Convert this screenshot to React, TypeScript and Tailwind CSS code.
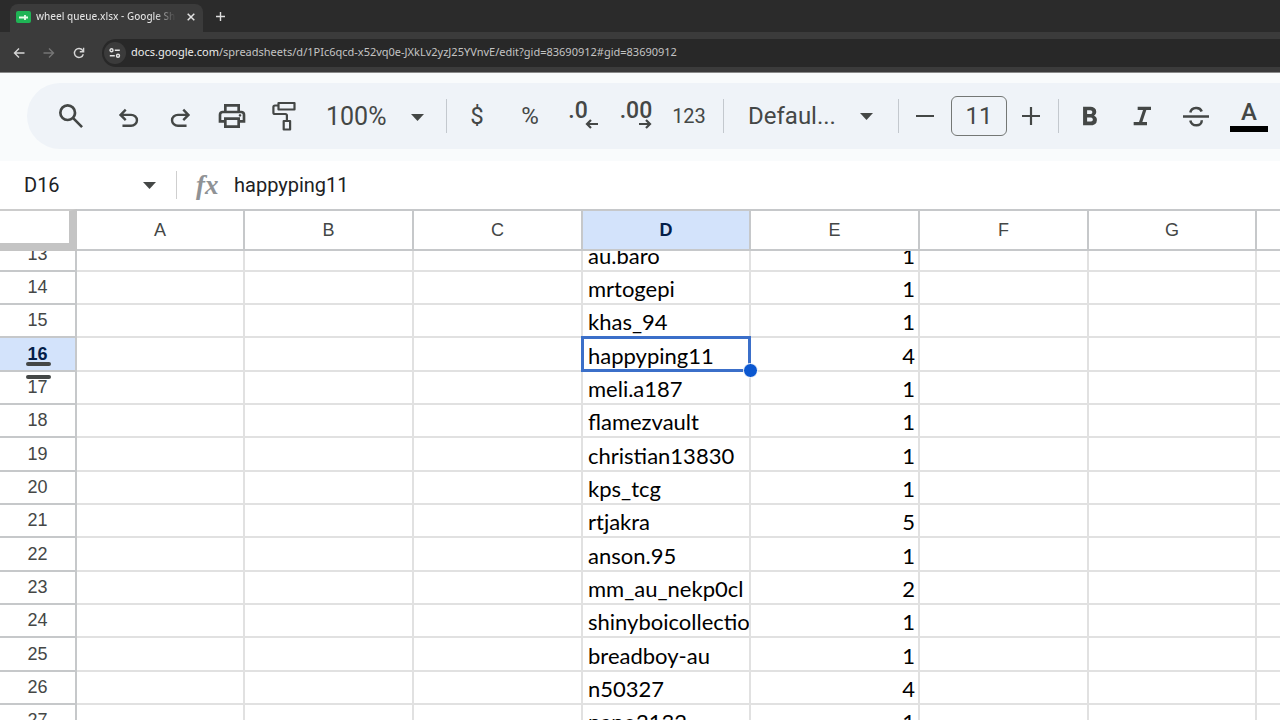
import React from "react";

const columns = [
  { name: "A", width: "w-[168px]" },
  { name: "B", width: "w-[169px]" },
  { name: "C", width: "w-[169px]" },
  { name: "D", width: "w-[168px]" },
  { name: "E", width: "w-[169px]" },
  { name: "F", width: "w-[169px]" },
  { name: "G", width: "w-[168px]" },
  { name: "", width: "" },
];

const rows = [
  { id: 13, user: "au.baro", count: 1 },
  { id: 14, user: "mrtogepi", count: 1 },
  { id: 15, user: "khas_94", count: 1 },
  { id: 16, user: "happyping11", count: 4 },
  { id: 17, user: "meli.a187", count: 1 },
  { id: 18, user: "flamezvault", count: 1 },
  { id: 19, user: "christian13830", count: 1 },
  { id: 20, user: "kps_tcg", count: 1 },
  { id: 21, user: "rtjakra", count: 5 },
  { id: 22, user: "anson.95", count: 1 },
  { id: 23, user: "mm_au_nekp0cl", count: 2 },
  { id: 24, user: "shinyboicollectio", count: 1 },
  { id: 25, user: "breadboy-au", count: 1 },
  { id: 26, user: "n50327", count: 4 },
  { id: 27, user: "nano2132", count: 1 },
];

const SELECTED_ROW = 16;

const paths = {
  search:
    "M784-120 532-372q-30 24-69 38t-83 14q-109 0-184.5-75.5T120-580q0-109 75.5-184.5T380-840q109 0 184.5 75.5T640-580q0 44-14 83t-38 69l252 252-56 56ZM380-400q75 0 127.5-52.5T560-580q0-75-52.5-127.5T380-760q-75 0-127.5 52.5T200-580q0 75 52.5 127.5T380-400Z",
  undo: "M280-200v-80h284q63 0 109.5-40T720-420q0-60-46.5-100T564-560H312l104 104-56 56-200-200 200-200 56 56-104 104h252q97 0 166.5 63T800-420q0 94-69.5 157T564-200H280Z",
  redo: "M396-200q-97 0-166.5-63T160-420q0-94 69.5-157T396-640h252L544-744l56-56 200 200-200 200-56-56 104-104H396q-63 0-109.5 40T240-420q0 60 46.5 100T396-280h284v80H396Z",
  print:
    "M640-640v-120H320v120h-80v-200h480v200h-80Zm80 180q17 0 28.5-11.5T760-500q0-17-11.5-28.5T720-540q-17 0-28.5 11.5T680-500q0 17 11.5 28.5T720-460Zm-80 260v-160H320v160h320Zm80 80H240v-160H80v-240q0-51 35-85.5t85-34.5h560q51 0 85.5 34.5T880-520v240H720v160Zm80-240v-160q0-17-11.5-28.5T760-560H200q-17 0-28.5 11.5T160-520v160h80v-80h480v80h80Z",
  bold: "M272-200v-560h221q65 0 120 40t55 111q0 51-23 78.5T602-491q25 11 55.5 41t30.5 90q0 89-65 124.5T501-200H272Zm121-112h104q48 0 58.5-24.5T566-372q0-11-10.5-35.5T494-432H393v120Zm0-228h93q33 0 48-17t15-38q0-24-17-39t-44-15h-95v109Z",
  italic: "M200-200v-100h160l120-360H320v-100h400v100H580L460-300h140v100H200Z",
};

const Glyph = ({ d, size = 32 }: { d: string; size?: number }) => (
  <svg width={size} height={size} viewBox="0 -960 960 960" fill="currentColor">
    <path d={d} />
  </svg>
);

const Caret = () => (
  <svg width="13" height="7" viewBox="0 0 13 7" fill="currentColor" className="pointer-events-none shrink-0">
    <path d="M0 0h13L6.500 7z" />
  </svg>
);

const Tool = ({ label, children }: { label: string; children: React.ReactNode }) => (
  <button aria-label={label} className="flex h-12 w-[52px] shrink-0 items-center justify-center">
    {children}
  </button>
);

const Divider = () => <div className="h-[34px] w-px shrink-0 bg-[#c3c8ce]" />;

const TabStrip = () => (
  <div className="flex h-8 items-end bg-[#2b2b2b] pl-[10px]">
    <div className="flex h-7 w-[193px] items-center rounded-t-lg bg-[#3b3b3b] pr-1 pb-[3px] pl-[6px]">
      <svg width="15" height="12" viewBox="0 0 15 12" className="shrink-0">
        <rect width="15" height="12" rx="2" fill="#1fb455" />
        <path d="M3 6.500h9M9 4v5" stroke="#e6fbe9" strokeWidth="1.800" />
      </svg>
      <span className="ml-[5px] w-[140px] overflow-hidden bg-linear-to-r from-[#e3e3e3] from-85% to-[#3b3b3b] bg-clip-text text-[10px] font-medium whitespace-nowrap text-transparent">
        wheel queue.xlsx - Google Shee
      </span>
      <button aria-label="Close tab" className="ml-auto p-1 text-[#e3e3e3]">
        <svg width="8" height="8" viewBox="0 0 8 8" stroke="currentColor" strokeWidth="1.500">
          <path d="M.7.7l6.600 6.600M7.300.7L.7 7.300" />
        </svg>
      </button>
    </div>
    <button aria-label="New tab" className="mb-[11px] ml-[13px] text-[#dedede]">
      <svg width="9" height="9" viewBox="0 0 9 9" stroke="currentColor" strokeWidth="1.400">
        <path d="M4.500 0v9M0 4.500h9" />
      </svg>
    </button>
  </div>
);

const AddressBar = () => (
  <div className="flex h-[41px] items-center border-b border-[#8a8a8a] bg-[#3b3b3b] pt-px pl-[13px]">
    <button aria-label="Back" className="text-[#d6d6d6]">
      <svg width="12" height="12" viewBox="0 0 12 12" fill="none" stroke="currentColor" strokeWidth="1.400">
        <path d="M11.500 6H1.500M6 1.500L1.500 6 6 10.500" />
      </svg>
    </button>
    <button aria-label="Forward" className="ml-[18px] text-[#757575]">
      <svg width="12" height="12" viewBox="0 0 12 12" fill="none" stroke="currentColor" strokeWidth="1.400">
        <path d="M.5 6h10M6 1.500L10.500 6 6 10.500" />
      </svg>
    </button>
    <button aria-label="Reload" className="ml-[18px] text-[#d6d6d6]">
      <svg width="12" height="12" viewBox="0 0 12 12" fill="none" stroke="currentColor" strokeWidth="1.400">
        <path d="M10.300 7.200A4.500 4.500 0 1 1 9.600 3.300L10.500 4.500M10.600.8v3.900H6.800" />
      </svg>
    </button>
    <div className="ml-[17px] flex h-7 flex-1 items-center rounded-l-full bg-[#282828] pl-[2px]">
      <button
        aria-label="Site information"
        className="flex size-[22px] items-center justify-center rounded-full bg-[#3b3b3b] text-[#e3e3e3]"
      >
        <svg width="12" height="10" viewBox="0 0 12 10" fill="none" stroke="currentColor" strokeWidth="1.400">
          <circle cx="2.500" cy="2.300" r="1.500" />
          <path d="M5.800 2.300h5M.8 7.700h5" />
          <circle cx="9" cy="7.700" r="1.500" />
        </svg>
      </button>
      <a href="#sheet" className="ml-[5px] text-[11px] whitespace-nowrap text-[#c4c4c4]">
        <span className="text-[#ececec]">docs.google.com</span>
        /spreadsheets/d/1PIc6qcd-x52vq0e-JXkLv2yzJ25YVnvE/edit?gid=83690912#gid=83690912
      </a>
    </div>
  </div>
);

const Toolbar = () => (
  <div className="bg-[#f9fbfc] pt-[10px] pb-3 pl-[27px]">
    <div className="flex h-[66px] items-center overflow-hidden rounded-l-full bg-[#eff3f8] pl-[18px] text-[#444746]">
      <Tool label="Search the menus">
        <Glyph d={paths.search} />
      </Tool>
      <div className="ml-[5px] flex pt-1">
        <Tool label="Undo">
          <Glyph d={paths.undo} size={29} />
        </Tool>
        <Tool label="Redo">
          <Glyph d={paths.redo} size={29} />
        </Tool>
      </div>
      <Tool label="Print">
        <Glyph d={paths.print} />
      </Tool>
      <Tool label="Paint format">
        <svg width="24" height="30" viewBox="0 0 24 30" fill="none" stroke="currentColor" strokeWidth="2.200" strokeLinejoin="round">
          <rect x="6.500" y="2" width="16" height="6.500" />
          <path d="M6.500 4.500H3a1.600 1.600 0 0 0-1.600 1.600v5.300A1.600 1.600 0 0 0 3 13h10.300a1.600 1.600 0 0 1 1.600 1.600V20" />
          <rect x="11.700" y="20" width="6.400" height="8.500" />
        </svg>
      </Tool>

      <label className="flex w-[136px] shrink-0 items-center pt-[2px] pl-4">
        <select aria-label="Zoom" className="w-[85px] appearance-none text-[25px] outline-none">
          <option>100%</option>
        </select>
        <Caret />
      </label>
      <Divider />

      <div className="mr-2 ml-1 flex gap-px">
        <Tool label="Format as currency">
          <span className="text-2xl">$</span>
        </Tool>
        <Tool label="Format as percent">
          <span className="text-2xl">%</span>
        </Tool>
        <Tool label="Decrease decimal places">
          <span className="flex flex-col text-[23px] leading-4 font-medium">
            <span className="pr-[10px]">.0</span>
            <svg width="13" height="10" viewBox="0 0 13 10" fill="none" stroke="currentColor" strokeWidth="2.200" className="self-end">
              <path d="M13 5H2M6 1L2 5l4 4" />
            </svg>
          </span>
        </Tool>
        <Tool label="Increase decimal places">
          <span className="flex flex-col text-[23px] leading-4 font-medium">
            .00
            <svg width="13" height="10" viewBox="0 0 13 10" fill="none" stroke="currentColor" strokeWidth="2.200" className="self-end">
              <path d="M0 5h11M7 1l4 4-4 4" />
            </svg>
          </span>
        </Tool>
        <Tool label="More formats">
          <span className="text-xl">123</span>
        </Tool>
      </div>
      <Divider />

      <label className="flex w-[174px] shrink-0 items-center pl-6">
        <select aria-label="Font" className="w-[112px] appearance-none text-2xl outline-none">
          <option>Defaul...</option>
        </select>
        <Caret />
      </label>
      <Divider />

      <button aria-label="Decrease font size" className="ml-4 shrink-0">
        <svg width="20" height="20" viewBox="0 0 20 20" stroke="currentColor" strokeWidth="2.200">
          <path d="M1 10h18" />
        </svg>
      </button>
      <input
        aria-label="Font size"
        defaultValue="11"
        className="mr-[14px] ml-4 h-10 w-14 shrink-0 rounded-md border border-[#747775] text-center text-2xl outline-none"
      />
      <button aria-label="Increase font size" className="mr-[17px] shrink-0">
        <svg width="20" height="20" viewBox="0 0 20 20" stroke="currentColor" strokeWidth="2.200">
          <path d="M1 10h18M10 1v18" />
        </svg>
      </button>
      <Divider />

      <div className="ml-[5px] flex gap-px">
        <Tool label="Bold">
          <Glyph d={paths.bold} />
        </Tool>
        <Tool label="Italic">
          <Glyph d={paths.italic} />
        </Tool>
        <Tool label="Strikethrough">
          <svg width="28" height="24" viewBox="0 0 28 24" fill="none" stroke="currentColor" strokeWidth="2.500">
            <path d="M1 12.500h26M8.300 8.500C9.500 3 18 2.500 19.700 7.500M8.300 16.500c1.500 6.500 11.500 6.500 11.500-.3" />
          </svg>
        </Tool>
        <Tool label="Text color">
          <span className="flex flex-col items-center gap-[2px] text-2xl leading-6 font-medium">
            A
            <span className="h-[6px] w-[38px] bg-black" />
          </span>
        </Tool>
      </div>
    </div>
  </div>
);

const FormulaBar = () => (
  <div className="flex h-12 items-center bg-white pl-6 text-[#202124]">
    <input aria-label="Name box" defaultValue="D16" className="w-[119px] text-xl outline-none" />
    <button aria-label="Named ranges" className="text-[#444746]">
      <Caret />
    </button>
    <div className="ml-5 h-7 w-px bg-[#cfcfcf]" />
    <label
      htmlFor="formula"
      className="w-[57px] pl-[19px] font-['Liberation_Serif'] text-[27px] leading-7 font-bold text-[#8f9295] italic"
    >
      fx
    </label>
    <input id="formula" defaultValue="happyping11" className="min-w-0 flex-1 text-xl outline-none" />
  </div>
);

const Sheet = () => (
  <table id="sheet" className="w-full table-fixed border-separate border-spacing-0 bg-white font-['Liberation_Sans',sans-serif]">
    <colgroup>
      <col className="w-[77px]" />
      {columns.map((col) => (
        <col key={col.name} className={col.width} />
      ))}
    </colgroup>
    <thead>
      <tr className="h-[42px]">
        <th className="border-t-2 border-r-8 border-b-8 border-t-[#cccccc] border-r-[#c4c4c4] border-b-[#c4c4c4]" />
        {columns.map((col) => (
          <th
            key={col.name}
            className={`border-y-2 border-r-2 border-[#c6c8ca] p-0 text-lg last:border-r-0 ${
              col.name === "D" ? "bg-[#d3e3fb] font-bold text-[#041e49]" : "font-normal text-[#444746]"
            }`}
          >
            {col.name}
          </th>
        ))}
      </tr>
    </thead>
    <tbody>
      {rows.map((row, i) => {
        const selected = row.id === SELECTED_ROW;
        // the first row is scrolled halfway under the header
        const box = i === 0 ? "h-[19px]" : i % 3 === 0 ? "h-8" : "h-[31px]";
        return (
          <tr key={row.id}>
            <th
              className={`relative border-r-2 border-b-2 border-[#c6c8ca] p-0 text-lg ${
                selected ? "bg-[#d3e3fb] font-bold text-[#041e49]" : "font-normal text-[#444746]"
              }`}
            >
              <div className={`flex flex-col justify-end overflow-hidden ${box}`}>
                <span className="h-8 shrink-0 leading-8">{row.id}</span>
              </div>
              {selected && (
                <div className="absolute top-6 left-[26px] z-10 flex flex-col gap-[9px]">
                  <div className="h-1 w-[25px] rounded-full bg-[#444746]" />
                  <div className="h-1 w-[25px] rounded-full bg-[#444746]" />
                </div>
              )}
            </th>
            {columns.map((col) => (
              <td
                key={col.name}
                className="relative border-r-2 border-b-2 border-[#e1e1e1] p-0 font-[Lato,sans-serif] text-[22px] text-black last:border-r-0"
              >
                <div className={`flex flex-col justify-end overflow-hidden pl-[5px] ${box}`}>
                  {col.name === "D" && <span className="h-[30px] shrink-0 leading-8 whitespace-nowrap">{row.user}</span>}
                  {col.name === "E" && <span className="h-[30px] shrink-0 pr-[3px] text-right leading-8">{row.count}</span>}
                </div>
                {selected && col.name === "D" && (
                  <div className="absolute -inset-[2px] z-10 border-[3px] border-[#3b6fc9]">
                    <div className="absolute -right-[10px] -bottom-[9px] size-[15px] rounded-full border border-white bg-[#0b57d0]" />
                  </div>
                )}
              </td>
            ))}
          </tr>
        );
      })}
    </tbody>
  </table>
);

export default function App() {
  return (
    <div className="h-screen overflow-hidden bg-white font-[Roboto,sans-serif]">
      <header className="font-['Noto_Sans',sans-serif]">
        <TabStrip />
        <AddressBar />
      </header>
      <Toolbar />
      <FormulaBar />
      <Sheet />
    </div>
  );
}
